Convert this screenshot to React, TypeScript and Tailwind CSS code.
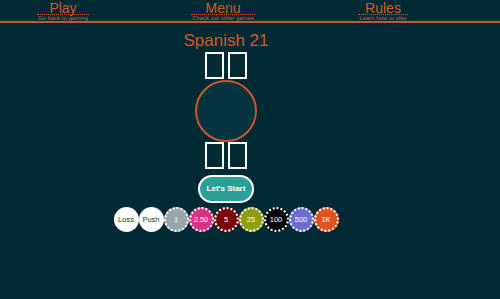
import React from 'react';

const NAV = [
  { title: 'Play', sub: 'Go back to gaming' },
  { title: 'Menu', sub: 'Check out other games' },
  { title: 'Rules', sub: 'Learn how to play' },
];

const CHIPS = [
  { label: '1', cls: 'bg-[#9aa5a6]' },
  { label: '2.50', cls: 'bg-[#d63384]' },
  { label: '5', cls: 'bg-[#7a0a0a]' },
  { label: '25', cls: 'bg-[#8e9d12]' },
  { label: '100', cls: 'bg-[#050505]' },
  { label: '500', cls: 'bg-[#6a6fcf]' },
  { label: '1K', cls: 'bg-[#e0531f]' },
];

const Card = () => <div className="w-[19px] h-[27px] border-2 border-white" />;

export default function App() {
  return (
    <div className="w-[500px] h-[299px] bg-[#022a35] overflow-hidden font-['Liberation_Sans',Arial,sans-serif]">
      <header className="h-[23px] border-b-2 border-[#c9572e] flex gap-[80px] pl-[23px]">
        {NAV.map((n) => (
          <div key={n.title} className="w-[80px] pt-[2px] flex flex-col items-center">
            <span className="text-[#d2582b] text-[14px] leading-[12px]">{n.title}</span>
            <span className="text-[#d0653e] text-[6px] leading-[6px] border-t border-dotted border-[#c9572e] px-[1px] whitespace-nowrap">
              {n.sub}
            </span>
          </div>
        ))}
      </header>

      <main className="w-[452px] flex flex-col items-center">
        <h1 className="mt-[8px] text-[#d2582b] text-[17px] leading-[20px]">Spanish 21</h1>
        <div className="mt-[1px] flex gap-[4px]">
          <Card />
          <Card />
        </div>
        <div className="mt-[1px] w-[62px] h-[62px] rounded-full border-2 border-[#c9572e] bg-[#05333f]" />
        <div className="flex gap-[4px]">
          <Card />
          <Card />
        </div>
        <button className="mt-[6px] w-[56px] h-[28px] rounded-full bg-[#2aa198] border-2 border-white text-white text-[8px] font-bold">
          Let's Start
        </button>
        <div className="mt-[4px] flex">
          {['Loss', 'Push'].map((l) => (
            <div key={l} className="w-[25px] h-[25px] rounded-full bg-white flex items-center justify-center text-[#333] text-[7.5px]">
              {l}
            </div>
          ))}
          {CHIPS.map((c) => (
            <div
              key={c.label}
              className={`w-[25px] h-[25px] rounded-full border-2 border-dotted border-white flex items-center justify-center text-white text-[7.5px] ${c.cls}`}
            >
              {c.label}
            </div>
          ))}
        </div>
      </main>
    </div>
  );
}
